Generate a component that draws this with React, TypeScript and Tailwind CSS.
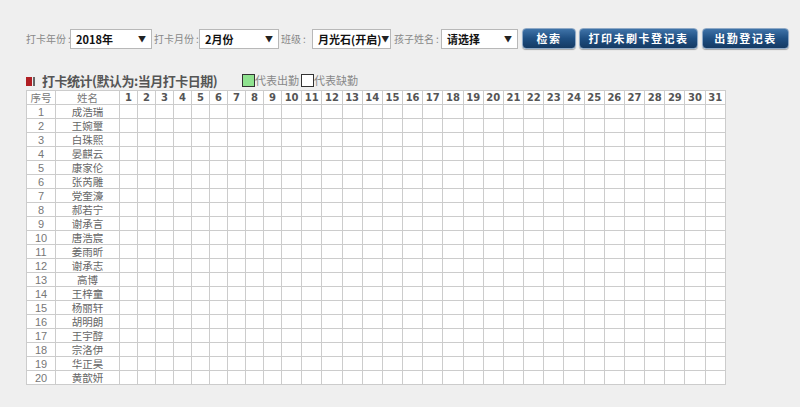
import React from "react";

const names = ["成浩瑞","王婉璽","白珠熙","晏麒云","康家伦","张芮雕","党奎濠","郝若宁","谢承言","唐浩宸","姜雨昕","谢承志","高博","王梓童","杨丽轩","胡明朗","王宇醇","宗洛伊","华正昊","黄歆妍"];
const days = Array.from({ length: 31 }, (_, i) => i + 1);

function Select({ value, w }: { value: string; w: string }) {
  return (
    <div className={`${w} shrink-0 h-[20px] bg-white border border-[#b8b8b8] flex items-center justify-between pl-[5px] pr-[5px] text-[11px] leading-[14px] text-[#111] font-semibold whitespace-nowrap overflow-hidden`}>
      <span>{value}</span>
      <span className="text-[8px] text-[#222]">▼</span>
    </div>
  );
}

function Btn({ label, w }: { label: string; w: string }) {
  return (
    <div className={`${w} shrink-0 h-[21px] rounded-[4px] border border-[#8fa9c6] bg-gradient-to-b from-[#3f73a8] via-[#1f4f82] to-[#153a63] text-white text-[11px] leading-[13px] font-semibold flex items-center justify-center tracking-[1.5px] whitespace-nowrap shadow-[0_1px_1px_rgba(0,0,0,0.3)]`}>
      {label}
    </div>
  );
}

function Label({ text, w, ml }: { text: string; w: string; ml: string }) {
  return (
    <span className={`${w} ${ml} shrink-0 whitespace-nowrap text-[10px] leading-[13px] text-[#888]`}>
      {text}
      <span className="ml-[2px]">:</span>
    </span>
  );
}

export default function App() {
  return (
    <div className="w-[800px] h-[407px] bg-[#efefef] overflow-hidden" style={{ fontFamily: '"Noto Sans CJK SC", "Noto Sans", sans-serif' }}>
      <div className="flex items-center pt-[28px] pl-[26px]">
        <Label text="打卡年份" w="w-[44px]" ml="ml-0" />
        <Select value="2018年" w="w-[82px]" />
        <Label text="打卡月份" w="w-[45px]" ml="ml-[2px]" />
        <Select value="2月份" w="w-[80px]" />
        <Label text="班级" w="w-[31px]" ml="ml-[2px]" />
        <Select value="月光石(开启)" w="w-[79px]" />
        <Label text="孩子姓名" w="w-[47px]" ml="ml-[3px]" />
        <Select value="请选择" w="w-[77px]" />
        <div className="ml-[4px] shrink-0"><Btn label="检索" w="w-[54px]" /></div>
        <div className="ml-[3px] shrink-0"><Btn label="打印未刷卡登记表" w="w-[119px]" /></div>
        <div className="ml-[4px] shrink-0"><Btn label="出勤登记表" w="w-[87px]" /></div>
      </div>

      <div className="flex items-end pl-[26px] mt-[24px] h-[16px]">
        <div className="flex items-center h-[16px]">
          <span className="w-[6px] h-[9px] bg-[#b01e23]" />
          <span className="w-[2px] h-[9px] bg-[#666] ml-[1px]" />
          <span className="ml-[7px] text-[13px] font-bold text-[#555] leading-[16px] tracking-[-0.5px] whitespace-nowrap">打卡统计(默认为:当月打卡日期)</span>
        </div>
        <div className="flex items-center ml-[25px] h-[14px] mb-[2px] text-[11px] leading-[13px] text-[#888] whitespace-nowrap">
          <span className="w-[13px] h-[13px] bg-[#8fe28f] border border-[#333]" />
          <span>代表出勤</span>
          <span className="ml-[2px] w-[13px] h-[13px] bg-white border border-[#333]" />
          <span>代表缺勤</span>
        </div>
      </div>

      <div className="pl-[26px] mt-[1px]">
        <table className="table-fixed border-collapse bg-white w-[700px]">
          <colgroup>
            <col className="w-[29px]" />
            <col className="w-[64px]" />
            {days.map((d) => (
              <col key={d} className={d < 10 ? "w-[18px]" : ""} />
            ))}
          </colgroup>
          <thead>
            <tr className="h-[14px]">
              <th className="border border-[#ccc] text-[10.5px] font-normal text-[#777] leading-[12px] p-0">序号</th>
              <th className="border border-[#ccc] text-[10.5px] font-normal text-[#777] leading-[12px] p-0">姓名</th>
              {days.map((d) => (
                <th key={d} className="border border-[#ccc] text-[10px] font-bold text-[#555] leading-[12px] p-0" style={{ fontFamily: '"DejaVu Sans", sans-serif' }}>
                  {d}
                </th>
              ))}
            </tr>
          </thead>
          <tbody>
            {names.map((n, i) => (
              <tr key={i} className="h-[14px]">
                <td className="border border-[#ccc] text-center text-[11px] text-[#777] leading-[12px] p-0" style={{ fontFamily: '"Liberation Sans", sans-serif' }}>{i + 1}</td>
                <td className="border border-[#ccc] text-center text-[10.5px] text-[#666] leading-[12px] p-0">{n}</td>
                {days.map((d) => (
                  <td key={d} className="border border-[#ccc] p-0" />
                ))}
              </tr>
            ))}
          </tbody>
        </table>
      </div>
    </div>
  );
}
